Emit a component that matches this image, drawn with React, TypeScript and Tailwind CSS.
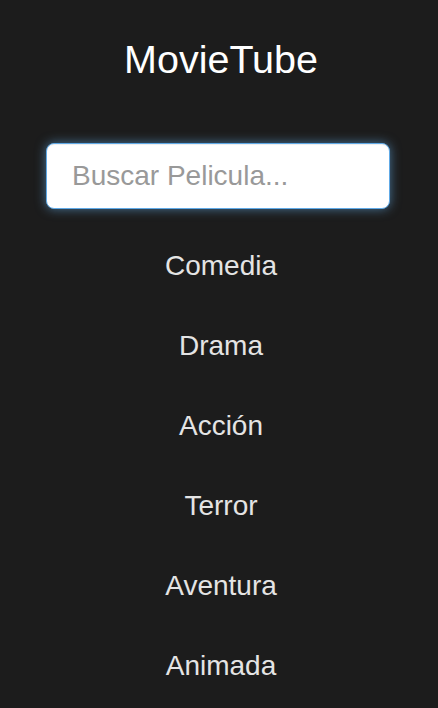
export default function App() {
  const items = ["Comedia", "Drama", "Acción", "Terror", "Aventura", "Animada"];
  return (
    <div
      className="min-h-[708px] w-full bg-[#1c1c1c] flex flex-col items-center pl-[4px]"
      style={{ fontFamily: '"Liberation Sans", Arial, sans-serif' }}
    >
      <h1 className="pt-[39px] h-[79px] text-[39.5px] leading-[40px] text-white font-normal">MovieTube</h1>
      <div className="mt-[64px] w-full pl-[42px] pr-[48px]">
        <input
          type="text"
          placeholder="Buscar Pelicula..."
          className="w-full h-[66px] rounded-[8px] border-[1.5px] border-[#5fa9e6] bg-white pl-[25px] pr-4 text-[28px] text-[#555] placeholder:text-[#999] outline-none shadow-[inset_0_1px_1px_rgba(0,0,0,0.075),0_0_11px_rgba(102,175,233,0.6)]"
        />
      </div>
      <ul className="mt-[17px] flex flex-col items-center w-full">
        {items.map((it) => (
          <li key={it} className="h-[80px] leading-[80px] text-[28px] text-[#e4e4e4]">
            {it}
          </li>
        ))}
      </ul>
    </div>
  );
}
